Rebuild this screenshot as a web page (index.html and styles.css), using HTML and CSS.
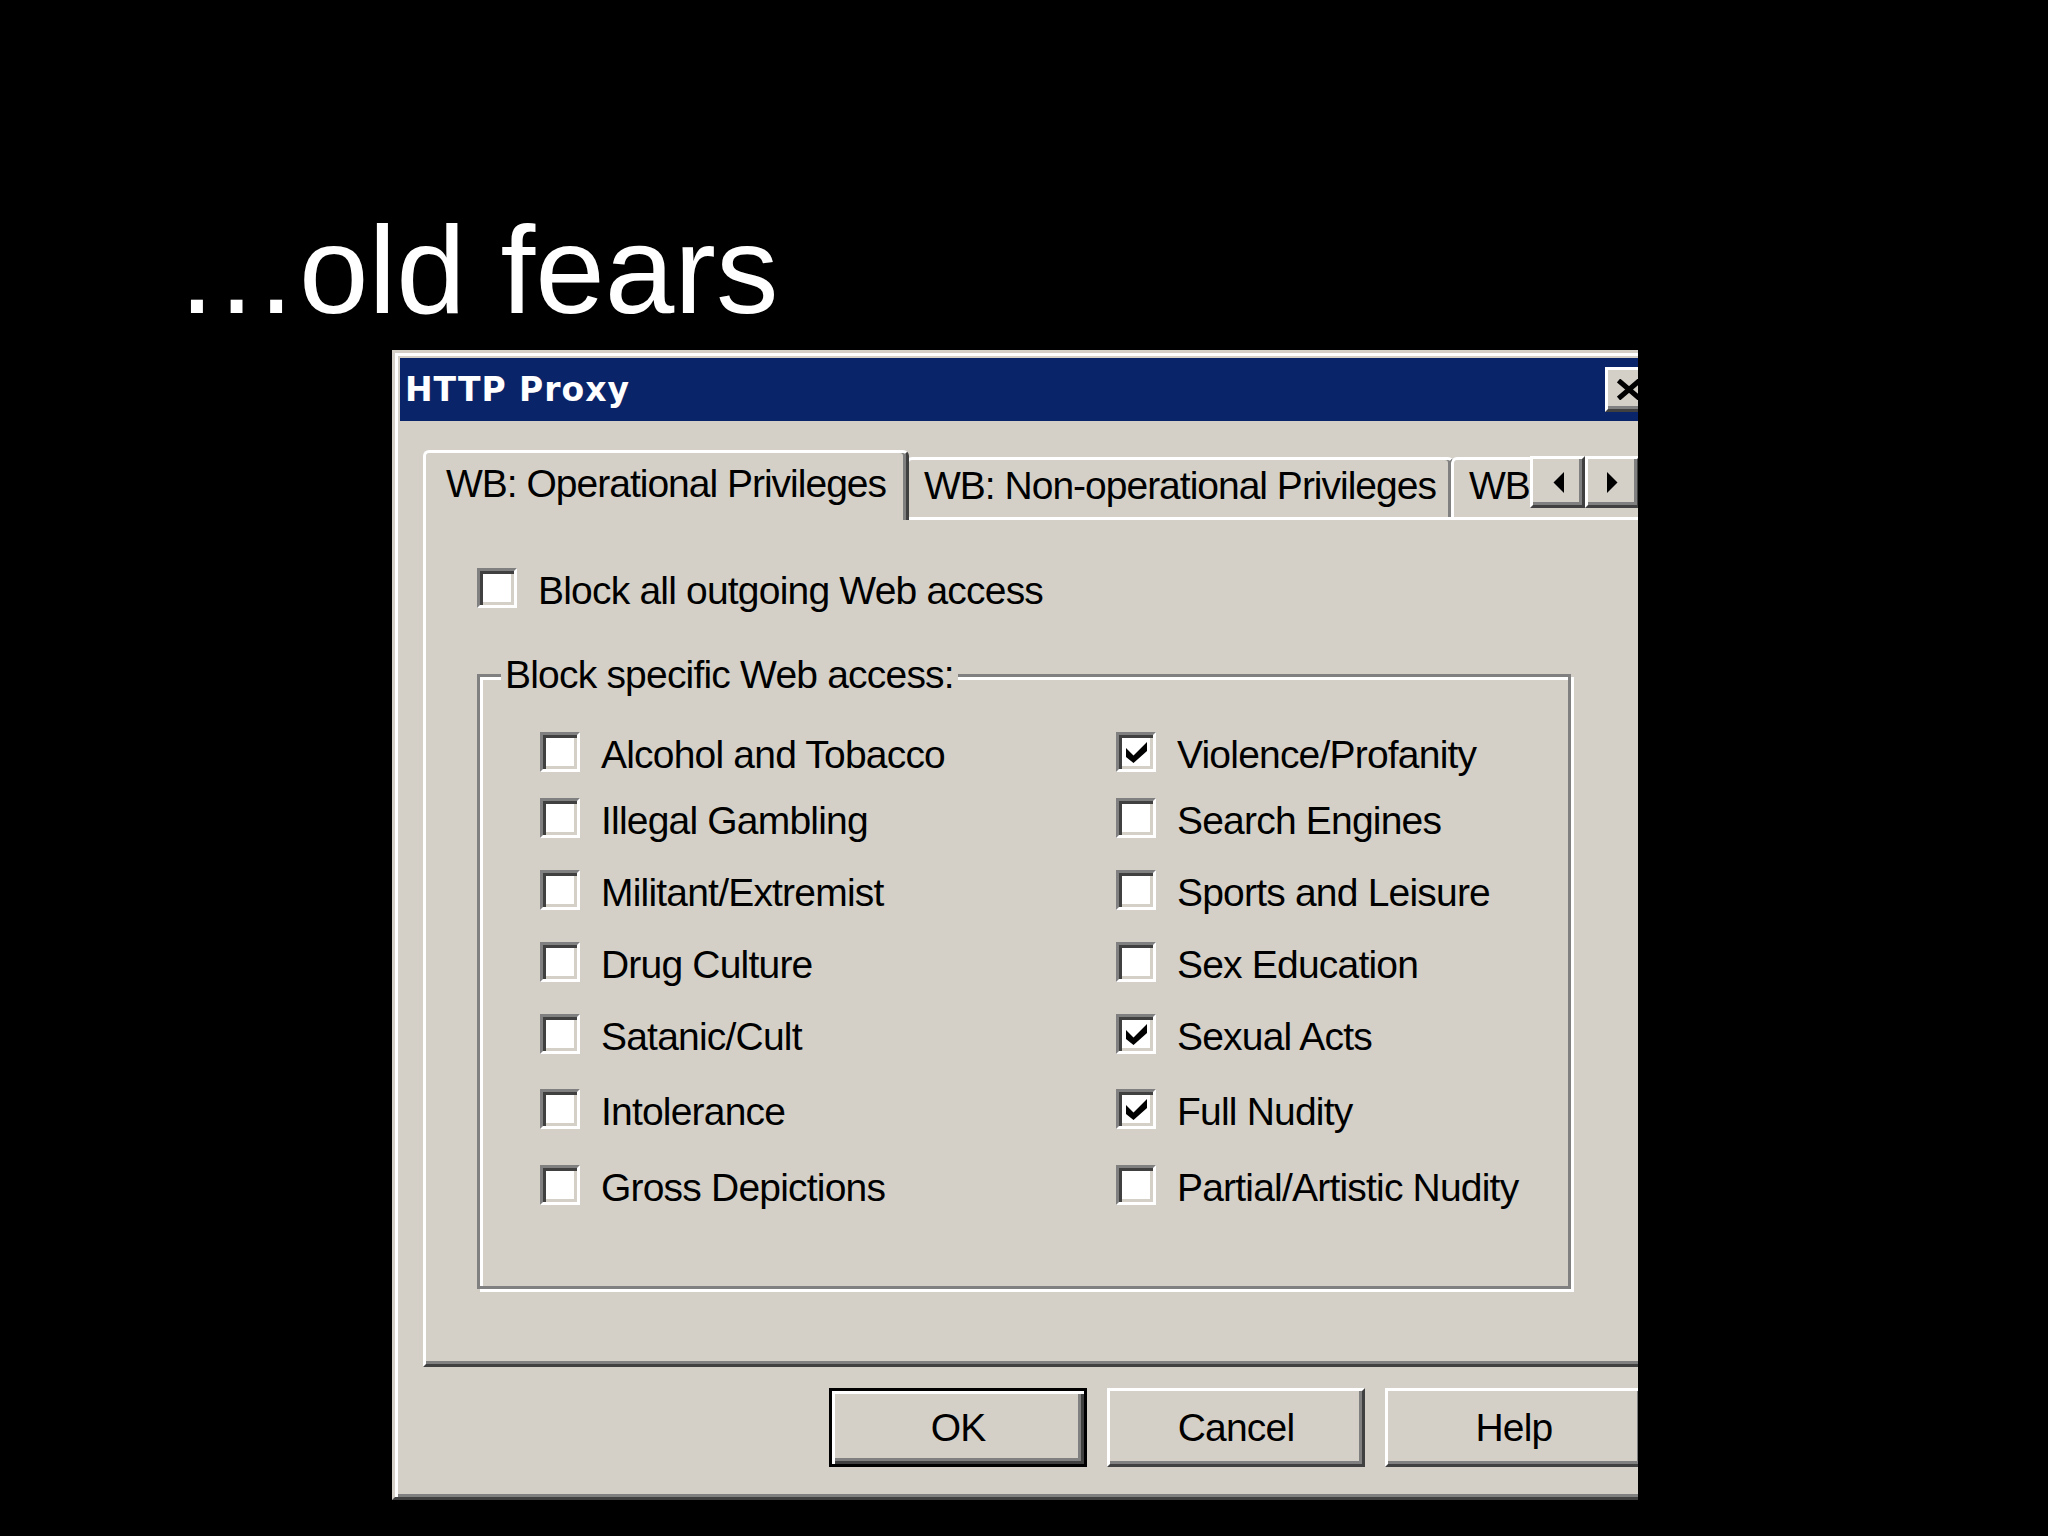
FILE: index.html
```html
<!DOCTYPE html>
<html lang="en">
<head>
    <meta charset="UTF-8">
    <title>...old fears</title>
    <link rel="stylesheet" href="styles.css">
</head>
<body>

<div class="slide">
    <h1 class="slide-title">…old fears</h1>

    <div class="shot">
        <div class="dialog">
            <div class="titlebar">
                <span class="caption">HTTP Proxy</span>
                <span class="close">
                    <svg width="24" height="21" viewBox="0 0 8 7"><path d="M0.5 0.5 L7.5 6.5 M7.5 0.5 L0.5 6.5" stroke="#000" stroke-width="1.7"/></svg>
                </span>
            </div>

            <div class="tabs">
                <div class="tab active">WB: Operational Privileges</div>
                <div class="tab">WB: Non-operational Privileges</div>
                <div class="tab last">WB</div>
                <!-- scroll buttons sit over the clipped third tab -->
                <div class="spin">
                    <span class="spin-btn"><svg width="12" height="21" viewBox="0 0 4 7"><polygon points="4,0 4,7 0.5,3.5" fill="#000"/></svg></span>
                    <span class="spin-btn"><svg width="12" height="21" viewBox="0 0 4 7"><polygon points="0,0 0,7 3.5,3.5" fill="#000"/></svg></span>
                </div>
            </div>

            <div class="panel">
                <label class="check"><span class="box"></span><span class="text">Block all outgoing Web access</span></label>

                <fieldset class="group">
                    <legend>Block specific Web access:</legend>
                    <div class="grid">
                        <label class="check"><span class="box"></span><span class="text">Alcohol and Tobacco</span></label>
                        <label class="check"><span class="box"></span><span class="text">Illegal Gambling</span></label>
                        <label class="check"><span class="box"></span><span class="text">Militant/Extremist</span></label>
                        <label class="check"><span class="box"></span><span class="text">Drug Culture</span></label>
                        <label class="check"><span class="box"></span><span class="text">Satanic/Cult</span></label>
                        <label class="check"><span class="box"></span><span class="text">Intolerance</span></label>
                        <label class="check"><span class="box"></span><span class="text">Gross Depictions</span></label>

                        <label class="check"><span class="box checked"><svg width="21" height="21" viewBox="0 0 7 7"><polygon points="0,2 2.5,4.5 7,0 7,3 2.5,7 0,5" fill="#000"/></svg></span><span class="text">Violence/Profanity</span></label>
                        <label class="check"><span class="box"></span><span class="text">Search Engines</span></label>
                        <label class="check"><span class="box"></span><span class="text">Sports and Leisure</span></label>
                        <label class="check"><span class="box"></span><span class="text">Sex Education</span></label>
                        <label class="check"><span class="box checked"><svg width="21" height="21" viewBox="0 0 7 7"><polygon points="0,2 2.5,4.5 7,0 7,3 2.5,7 0,5" fill="#000"/></svg></span><span class="text">Sexual Acts</span></label>
                        <label class="check"><span class="box checked"><svg width="21" height="21" viewBox="0 0 7 7"><polygon points="0,2 2.5,4.5 7,0 7,3 2.5,7 0,5" fill="#000"/></svg></span><span class="text">Full Nudity</span></label>
                        <label class="check"><span class="box"></span><span class="text">Partial/Artistic Nudity</span></label>
                    </div>
                </fieldset>
            </div>

            <div class="buttons">
                <button class="btn default">OK</button>
                <button class="btn">Cancel</button>
                <button class="btn">Help</button>
            </div>
        </div>
    </div>
</div>

</body>
</html>
```

FILE: styles.css
```css
* {
    box-sizing: border-box;
}
body {
    margin: 0;
    background-color: #000;
    font-family: "Liberation Sans", Arial, sans-serif;
}
.slide {
    height: 1536px;
    overflow: hidden;
}
.slide-title {
    margin: 0;
    padding: 208px 0 0 174px;
    font-size: 125px;
    font-weight: normal;
    line-height: 124px;
    color: #fff;
}
/* the screenshot is cropped on the right */
.shot {
    margin: 18px 0 0 392px;
    width: 1246px;
    height: 1150px;
    overflow: hidden;
}
.dialog {
    width: 1275px;
    height: 1150px;
    padding: 5px;
    background-color: #d4d0c8;
    border: 3px solid;
    border-color: #d4d0c8 #404040 #404040 #d4d0c8;
    box-shadow: inset 3px 3px #fff, inset -3px -3px #808080;
    font-size: 39px;
    letter-spacing: -0.8px;
    color: #000;
}
.titlebar {
    height: 63px;
    padding: 0 6px 0 5px;
    display: flex;
    align-items: center;
    justify-content: space-between;
    background-color: #0a246a;
}
.caption {
    font-family: "DejaVu Sans", sans-serif;
    font-weight: bold;
    font-size: 33px;
    letter-spacing: 1px;
    color: #fff;
}
.close {
    width: 48px;
    height: 45px;
    display: flex;
    align-items: center;
    justify-content: center;
    background-color: #d4d0c8;
    border: 3px solid;
    border-color: #fff #404040 #404040 #fff;
    box-shadow: inset -3px -3px #808080;
}
/* tabs */
.tabs {
    position: relative;
    height: 67px;
    margin: 29px 0 0 23px;
    display: flex;
    align-items: flex-end;
}
.tab {
    flex: none;
    height: 60px;
    margin-left: -3px;
    padding: 0 15px;
    line-height: 52px;
    letter-spacing: -1px;
    white-space: nowrap;
    background-color: #d4d0c8;
    border-top: 3px solid #fff;
    border-left: 3px solid #fff;
    border-right: 3px solid #404040;
    border-radius: 6px 6px 0 0;
    box-shadow: inset -3px 0 #808080;
}
.tab.active {
    position: relative;
    z-index: 1;
    height: 70px;
    margin: 0 0 -3px 0;
    padding: 5px 20px 0;
}
.tab.last {
    width: 200px;
}
.spin {
    position: absolute;
    left: 1107px;
    top: 6px;
    z-index: 2;
    display: flex;
}
.spin-btn {
    width: 55px;
    height: 52px;
    display: flex;
    align-items: center;
    justify-content: center;
    background-color: #d4d0c8;
    border: 3px solid;
    border-color: #fff #404040 #404040 #fff;
    box-shadow: inset -3px -3px #808080;
}
/* tab page */
.panel {
    height: 850px;
    margin: 0 9px 0 23px;
    padding: 48px 0 0 51px;
    border: 3px solid;
    border-color: #fff #404040 #404040 #fff;
    box-shadow: inset -3px -3px #808080;
}
.check {
    height: 40px;
    display: flex;
    align-items: center;
    gap: 21px;
    white-space: nowrap;
}
.check .text {
    padding-top: 6px;
    line-height: 40px;
}
.box {
    flex: none;
    width: 40px;
    height: 40px;
    display: flex;
    align-items: center;
    justify-content: center;
    background-color: #fff;
    border: 3px solid;
    border-color: #808080 #fff #fff #808080;
    box-shadow: inset 3px 3px #404040, inset -3px -3px #d4d0c8;
}
.group {
    width: 1094px;
    min-width: 0;
    margin: 47px 0 0 0;
    padding: 0 0 81px 0;
    border: 3px solid #808080;
    box-shadow: inset 3px 3px #fff, 3px 3px #fff;
}
.group legend {
    margin-left: 21px;
    padding: 0 4px;
    line-height: 40px;
    background-color: #d4d0c8;
}
.grid {
    margin: 37px 0 0 60px;
    display: grid;
    grid-template-columns: 576px auto;
    grid-template-rows: 66px 72px 72px 72px 75px 76px 40px;
    grid-auto-flow: column;
}
/* buttons */
.buttons {
    margin: 21px 0 0 429px;
    display: flex;
    gap: 20px;
}
.btn {
    flex: none;
    width: 258px;
    height: 79px;
    padding: 0;
    font: inherit;
    letter-spacing: inherit;
    color: #000;
    background-color: #d4d0c8;
    border: 3px solid;
    border-color: #fff #404040 #404040 #fff;
    box-shadow: inset -3px -3px #808080;
}
.btn.default {
    border-color: #000;
    box-shadow: inset 3px 3px #fff, inset -3px -3px #404040, inset -6px -6px #808080;
}
```
